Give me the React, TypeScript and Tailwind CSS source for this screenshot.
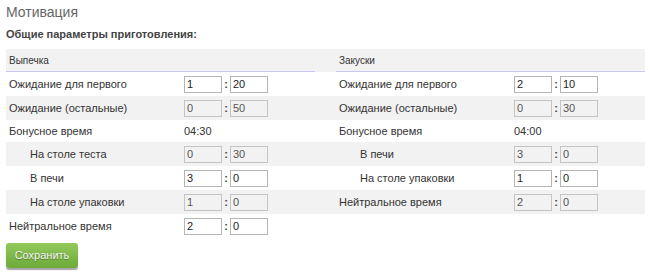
import React from 'react';

type Cell = {
  label: string;
  indent?: boolean;
  value?: string;
  h?: string;
  m?: string;
  disabled?: boolean;
} | null;

const ROWS: [Cell, Cell][] = [
  [
    { label: 'Ожидание для первого', h: '1', m: '20' },
    { label: 'Ожидание для первого', h: '2', m: '10' },
  ],
  [
    { label: 'Ожидание (остальные)', h: '0', m: '50', disabled: true },
    { label: 'Ожидание (остальные)', h: '0', m: '30', disabled: true },
  ],
  [
    { label: 'Бонусное время', value: '04:30' },
    { label: 'Бонусное время', value: '04:00' },
  ],
  [
    { label: 'На столе теста', indent: true, h: '0', m: '30', disabled: true },
    { label: 'В печи', indent: true, h: '3', m: '0', disabled: true },
  ],
  [
    { label: 'В печи', indent: true, h: '3', m: '0' },
    { label: 'На столе упаковки', indent: true, h: '1', m: '0' },
  ],
  [
    { label: 'На столе упаковки', indent: true, h: '1', m: '0', disabled: true },
    { label: 'Нейтральное время', h: '2', m: '0', disabled: true },
  ],
  [{ label: 'Нейтральное время', h: '2', m: '0' }, null],
];

function TimeInput({ v, disabled }: { v: string; disabled?: boolean }) {
  return (
    <input
      readOnly
      value={v}
      className={`w-[38px] h-[17px] px-[2px] text-[11px] leading-none outline-none border font-['Liberation_Sans'] ${
        disabled ? 'bg-transparent border-[#c4c4c4] text-[#555]' : 'bg-white border-[#b5b5b5] text-[#222]'
      }`}
    />
  );
}

function Half({ cell }: { cell: Cell }) {
  if (!cell) return <div className="w-[309px]" />;
  return (
    <div className="w-[309px] flex items-center">
      <div className={`w-[178px] ${cell.indent ? 'pl-[24px]' : 'pl-[3px]'}`}>{cell.label}</div>
      {cell.value ? (
        <span>{cell.value}</span>
      ) : (
        <div className="flex items-center">
          <TimeInput v={cell.h!} disabled={cell.disabled} />
          <span className="w-[8px] text-center font-bold text-[#444]">:</span>
          <TimeInput v={cell.m!} disabled={cell.disabled} />
        </div>
      )}
    </div>
  );
}

export default function App() {
  return (
    <div className="w-[650px] h-[274px] bg-white px-[6px] pt-[3px] text-[11px] text-[#333] font-['Liberation_Sans']">
      <h1 className="text-[14px] leading-[18px] text-[#666] font-normal">Мотивация</h1>
      <p className="mt-[6px] text-[11px] leading-[14px] font-bold text-[#444]">Общие параметры приготовления:</p>

      <div className="mt-[8px] w-[639px]">
        {/* Header row */}
        <div className="flex gap-[21px] bg-[#f2f2f2] h-[23px] text-[10px]">
          <div className="w-[309px] border-b border-[#c8c8f2] flex items-center pl-[3px]">Выпечка</div>
          <div className="w-[309px] border-b border-[#c8c8f2] flex items-center pl-[3px]">Закуски</div>
        </div>
        {ROWS.map((row, i) => (
          <div
            key={i}
            className={`flex gap-[21px] ${row[0]?.value ? 'h-[22px]' : 'h-[24px]'} ${i % 2 === 1 ? 'bg-[#f2f2f2]' : 'bg-white'}`}
          >
            <Half cell={row[0]} />
            <Half cell={row[1]} />
          </div>
        ))}
      </div>

      <button className="mt-[5px] w-[72px] h-[25px] rounded-[3px] bg-gradient-to-b from-[#93c95a] to-[#6caa3a] text-[#f4f4f4] text-[11px] [text-shadow:0_1px_1px_rgba(0,0,0,0.35)] shadow-[0_2px_1px_rgba(0,0,0,0.35)]">
        Сохранить
      </button>
    </div>
  );
}
